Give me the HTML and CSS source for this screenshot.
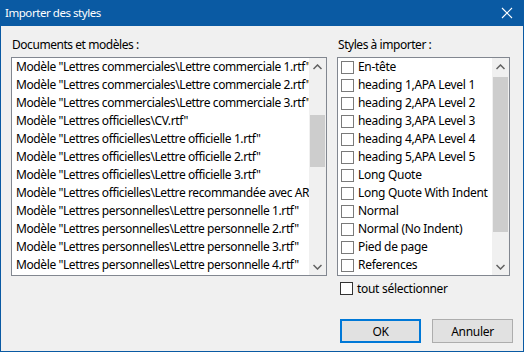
FILE: index.html
```
<!DOCTYPE html>
<html lang="fr">
<head>
<meta charset="utf-8">
<title>Importer des styles</title>
<link rel="stylesheet" href="styles.css">
</head>
<body>
<div class="window">
  <div class="titlebar">
    <span class="title">Importer des styles</span>
    <svg class="close" width="12" height="12" viewBox="0 0 12 12"><path d="M1 1L11 11M11 1L1 11" stroke="#fff" stroke-width="1.1" fill="none"/></svg>
  </div>
  <div class="content">
    <div class="columns">
      <div class="col left">
        <div class="label">Documents et modèles :</div>
        <div class="listbox docs">
          <div class="items">
            <div class="item">Modèle "Lettres commerciales\Lettre commerciale 1.rtf"</div>
            <div class="item">Modèle "Lettres commerciales\Lettre commerciale 2.rtf"</div>
            <div class="item">Modèle "Lettres commerciales\Lettre commerciale 3.rtf"</div>
            <div class="item">Modèle "Lettres officielles\CV.rtf"</div>
            <div class="item">Modèle "Lettres officielles\Lettre officielle 1.rtf"</div>
            <div class="item">Modèle "Lettres officielles\Lettre officielle 2.rtf"</div>
            <div class="item">Modèle "Lettres officielles\Lettre officielle 3.rtf"</div>
            <div class="item">Modèle "Lettres officielles\Lettre recommandée avec AR.rtf"</div>
            <div class="item">Modèle "Lettres personnelles\Lettre personnelle 1.rtf"</div>
            <div class="item">Modèle "Lettres personnelles\Lettre personnelle 2.rtf"</div>
            <div class="item">Modèle "Lettres personnelles\Lettre personnelle 3.rtf"</div>
            <div class="item">Modèle "Lettres personnelles\Lettre personnelle 4.rtf"</div>
          </div>
          <div class="scrollbar">
            <div class="arrow"><svg width="9" height="6" viewBox="0 0 9 6"><path d="M0.5 5L4.5 1L8.5 5" stroke="#606060" stroke-width="1.5" fill="none"/></svg></div>
            <div class="track">
              <div class="spacer" style="height:40px"></div>
              <div class="thumb" style="height:52px"></div>
            </div>
            <div class="arrow"><svg width="9" height="6" viewBox="0 0 9 6"><path d="M0.5 1L4.5 5L8.5 1" stroke="#606060" stroke-width="1.5" fill="none"/></svg></div>
          </div>
        </div>
      </div>
      <div class="col right">
        <div class="label">Styles à importer :</div>
        <div class="listbox styles">
          <div class="items">
            <div class="item"><span class="cb"></span>En-tête</div>
            <div class="item"><span class="cb"></span>heading 1,APA Level 1</div>
            <div class="item"><span class="cb"></span>heading 2,APA Level 2</div>
            <div class="item"><span class="cb"></span>heading 3,APA Level 3</div>
            <div class="item"><span class="cb"></span>heading 4,APA Level 4</div>
            <div class="item"><span class="cb"></span>heading 5,APA Level 5</div>
            <div class="item"><span class="cb"></span>Long Quote</div>
            <div class="item"><span class="cb"></span>Long Quote With Indent</div>
            <div class="item"><span class="cb"></span>Normal</div>
            <div class="item"><span class="cb"></span>Normal (No Indent)</div>
            <div class="item"><span class="cb"></span>Pied de page</div>
            <div class="item"><span class="cb"></span>References</div>
          </div>
          <div class="scrollbar">
            <div class="arrow"><svg width="9" height="6" viewBox="0 0 9 6"><path d="M0.5 5L4.5 1L8.5 5" stroke="#606060" stroke-width="1.5" fill="none"/></svg></div>
            <div class="track">
              <div class="spacer" style="height:2px"></div>
              <div class="thumb" style="height:155px"></div>
            </div>
            <div class="arrow"><svg width="9" height="6" viewBox="0 0 9 6"><path d="M0.5 1L4.5 5L8.5 1" stroke="#606060" stroke-width="1.5" fill="none"/></svg></div>
          </div>
        </div>
        <label class="selectall"><span class="cb outer"></span>tout sélectionner</label>
      </div>
    </div>
    <div class="buttons">
      <div class="btn default">OK</div>
      <div class="btn">Annuler</div>
    </div>
  </div>
</div>
</body>
</html>
```
FILE: styles.css
```
* { box-sizing: border-box; }
html, body { margin: 0; padding: 0; }
body {
  width: 524px;
  height: 352px;
  overflow: hidden;
  font-family: "Noto Sans", "Open Sans", sans-serif;
  font-size: 12px;
  letter-spacing: -0.3px;
  color: #000;
  background: #f0f0f0;
}
.window {
  width: 524px;
  height: 352px;
  border: 1px solid #0a5aa3;
  border-top: 0;
  display: flex;
  flex-direction: column;
  background: #f0f0f0;
}
.titlebar {
  height: 26px;
  background: #0a5aa3;
  color: #fff;
  display: flex;
  align-items: center;
  justify-content: space-between;
  padding: 0 10px 0 4px;
  flex: none;
}
.title { font-size: 11.5px; line-height: 16px; letter-spacing: -0.45px; }
.close { display: block; }
.content {
  flex: 1;
  display: flex;
  flex-direction: column;
  padding: 11px 10px 0 10px;
}
.columns {
  display: flex;
  gap: 10px;
}
.col { display: flex; flex-direction: column; }
.left { width: 316px; }
.right { width: 173px; }
.label {
  height: 20px;
  line-height: 16px;
  padding-left: 1px;
  letter-spacing: -0.45px;
}
.listbox {
  height: 219px;
  border: 1px solid #828790;
  background: #fff;
  display: flex;
  overflow: hidden;
}
.items {
  flex: 1;
  min-width: 0;
  overflow: hidden;
}
.item {
  height: 18px;
  line-height: 18px;
  white-space: nowrap;
  overflow: hidden;
  display: flex;
  align-items: center;
}
.docs .item { padding-left: 4px; letter-spacing: -0.4px; }
.styles .item { padding-left: 3px; }
.cb {
  width: 13px;
  height: 13px;
  border: 1px solid #7a7a7a;
  background: #fff;
  margin-right: 4px;
  flex: none;
}
.scrollbar {
  width: 17px;
  flex: none;
  background: #f0f0f0;
  display: flex;
  flex-direction: column;
}
.arrow {
  height: 17px;
  display: flex;
  align-items: center;
  justify-content: center;
  flex: none;
}
.arrow svg { display: block; }
.track { flex: 1; }
.thumb {
  background: #cdcdcd;
  margin: 0 1px;
}
.selectall {
  display: flex;
  align-items: center;
  height: 18px;
  margin-top: 3px;
  padding-left: 3px;
}
.cb.outer { border-color: #333; }
.buttons {
  display: flex;
  justify-content: flex-end;
  gap: 11px;
  margin-top: 22px;
  padding-right: 0;
}
.btn {
  width: 81px;
  height: 24px;
  border: 1px solid #adadad;
  background: #e1e1e1;
  display: flex;
  align-items: center;
  justify-content: center;
}
.btn.default {
  border: 2px solid #0078d7;
}
```
